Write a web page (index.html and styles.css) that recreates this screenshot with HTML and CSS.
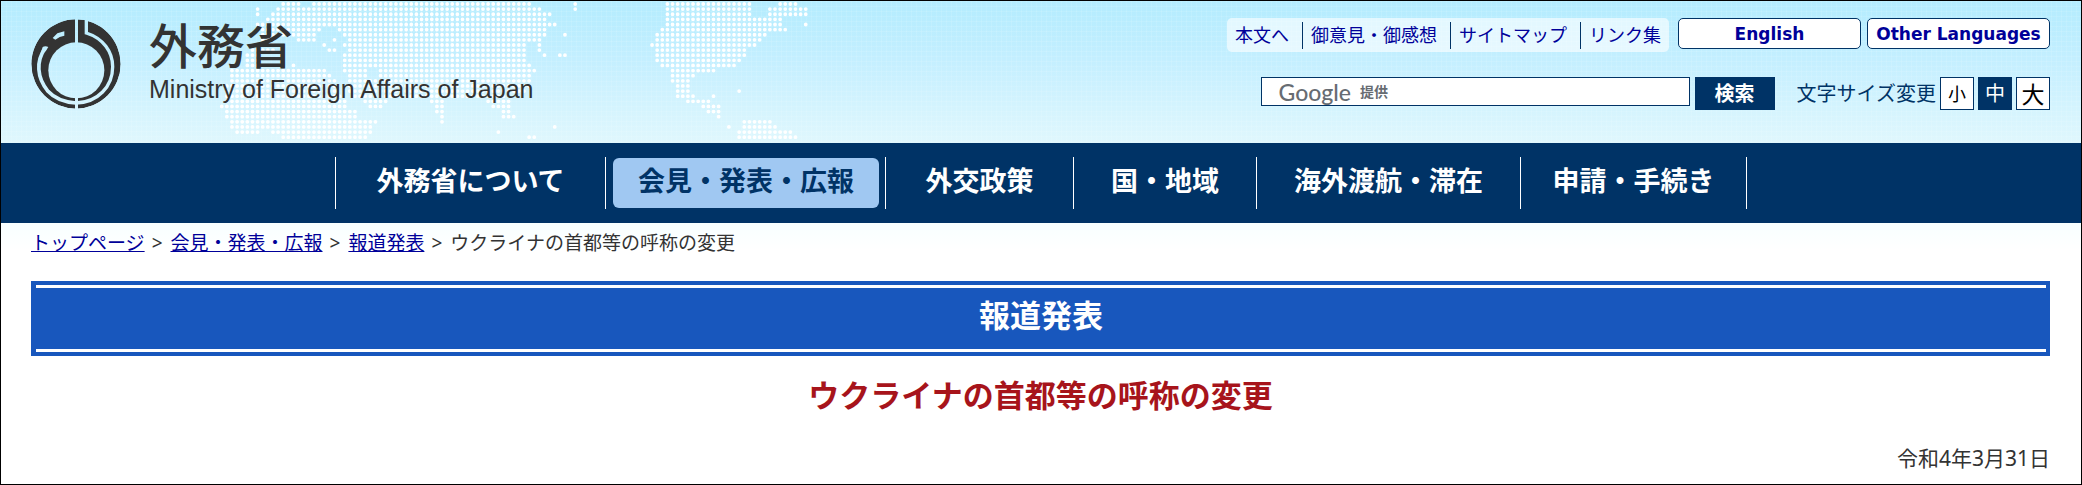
FILE: index.html
```html
<!DOCTYPE html>
<html lang="ja">
<head>
<meta charset="utf-8">
<meta name="viewport" content="width=device-width">
<title>ウクライナの首都等の呼称の変更|外務省</title>
<link rel="stylesheet" href="styles.css">
</head>
<body>
<header class="header">
  <svg class="world" viewBox="0 0 122 27" aria-hidden="true">
    <path d="M13 0h0M18 0h4M24 0h43M75 0h1M93 0h17M115 0h4
    M11 1h0M13 1h1M17 1h52M75 1h1M93 1h17M113 1h8
    M11 2h0M13 2h1M16 2h55M93 2h17M113 2h8
    M15 3h55M72 3h0M93 3h23M120 3h0
    M13 4h59M93 4h23M120 4h1
    M14 5h12M29 5h41M92 5h25
    M14 6h11M30 6h40M73 6h1M91 6h22
    M14 7h3M21 7h4M28 7h1M31 7h38M91 7h21
    M14 8h3M20 8h0M22 8h0M26 8h1M30 8h36M68 8h1M74 8h0M90 8h21
    M12 9h5M24 9h0M27 9h2M31 9h35M68 9h1M74 9h0M91 9h18
    M11 10h3M25 10h0M30 10h36M69 10h1M72 10h2M91 10h18
    M11 11h3M30 11h36M91 11h17
    M11 12h4M20 12h1M30 12h37M92 12h15
    M8 13h19M30 13h5M37 13h31M92 13h0M94 13h9M106 13h0
    M8 14h20M31 14h4M37 14h30M92 14h0M94 14h5M106 14h0
    M8 15h21M31 15h36M94 15h4
    M7 16h22M31 16h36M93 16h0M95 16h3
    M7 17h22M31 17h35M95 17h3M103 17h0M107 17h1
    M7 18h23M32 18h30M95 18h4M102 18h1M110 18h0
    M7 19h24M34 19h5M47 19h3M58 19h5M69 19h0M97 19h5
    M6 20h25M35 20h3M48 20h2M59 20h4M69 20h0M100 20h4
    M7 21h26M48 21h2M59 21h0M61 21h2M70 21h0M101 21h3
    M7 22h26M49 22h1M59 22h0M61 22h3M71 22h0M103 22h1M109 22h0M111 22h0
    M8 23h29M49 23h1M59 23h0M62 23h0M68 23h0M70 23h0M104 23h0M108 23h6
    M8 24h28M51 24h0M60 24h0M71 24h1M105 24h1M108 24h7
    M9 25h5M16 25h20M60 25h1M68 25h0M107 25h11
    M18 26h17M59 26h0M61 26h0M66 26h2M107 26h12"/>
  </svg>
  <a class="brand" href="#">
    <svg class="emblem" viewBox="33 40 270 270" aria-hidden="true">
      <mask id="cut">
        <circle cx="168" cy="175" r="134" fill="#fff"/>
        <g fill="none" stroke="#000">
          <path d="M165 30h9v90h-9zM165 270h9v45h-9z" fill="#000" stroke="none"/>
          <circle cx="169" cy="194" r="84" fill="#000" stroke="none"/>
          <path d="M75 128C48 166 50 216 84 257C106 281 136 290 168 292" stroke-width="11"/>
          <path d="M199 40V82C250 98 278 139 278 183C278 242 234 290 168 292" stroke-width="10"/>
          <path d="M68 124q8-5 17 0l-8 13h-13z" fill="#000" stroke="none"/>
          <path d="M98 97l14-14 21-6v13q-14 2-27 12z" fill="#000" stroke="none"/>
        </g>
      </mask>
      <circle cx="168" cy="175" r="134" fill="#333" mask="url(#cut)"/>
    </svg>
    <span class="brand-text">
      <span class="brand-ja">外務省</span>
      <span class="brand-en">Ministry of Foreign Affairs of Japan</span>
    </span>
  </a>
  <div class="tools">
    <div class="tools-row">
      <ul class="quick">
        <li><a href="#">本文へ</a></li>
        <li><a href="#">御意見・御感想</a></li>
        <li><a href="#">サイトマップ</a></li>
        <li><a href="#">リンク集</a></li>
      </ul>
      <div class="langs">
        <a class="lang" href="#">English</a>
        <a class="lang" href="#">Other Languages</a>
      </div>
    </div>
    <div class="tools-row second">
      <form class="search">
        <div class="field">
          <label for="q"><span class="google">Google</span><span class="offer">提供</span></label>
          <input id="q" type="text">
        </div>
        <button class="go" type="button">検索</button>
      </form>
      <div class="sizes">
        <span class="sizes-label">文字サイズ変更</span>
        <button class="size small" type="button">小</button>
        <button class="size current" type="button">中</button>
        <button class="size large" type="button">大</button>
      </div>
    </div>
  </div>
</header>
<nav class="nav">
  <ul>
    <li><a href="#">外務省について</a></li>
    <li><a class="active" href="#">会見・発表・広報</a></li>
    <li><a href="#">外交政策</a></li>
    <li><a href="#">国・地域</a></li>
    <li><a href="#">海外渡航・滞在</a></li>
    <li><a href="#">申請・手続き</a></li>
  </ul>
</nav>
<main class="main">
  <div class="crumbs"><a href="#">トップページ</a><span>&gt;</span><a href="#">会見・発表・広報</a><span>&gt;</span><a href="#">報道発表</a><span>&gt;</span>ウクライナの首都等の呼称の変更</div>
  <div class="banner"><h2>報道発表</h2></div>
  <h1 class="title">ウクライナの首都等の呼称の変更</h1>
  <p class="date">令和4年3月31日</p>
</main>
</body>
</html>
```
FILE: styles.css
```css
* { box-sizing: border-box; }
body {
  margin: 0;
  min-height: 100vh;
  border: 1px solid #000;
  color: #333;
  font-family: "Noto Sans", "Noto Sans CJK JP", sans-serif;
  background: #fff linear-gradient(#b3ecfe 0, #c4efff 60px, #e2f8fd 150px, #f8ffff 225px, #fff 250px) no-repeat;
}
ul, h1, h2, p { margin: 0; padding: 0; list-style: none; }
a { color: #009; }
button, input { font-family: inherit; margin: 0; padding: 0; }

.header {
  position: relative;
  min-height: 142px;
  padding: 17px 31px 0 30px;
  display: flex;
  justify-content: space-between;
  overflow: hidden;
  background:
    repeating-linear-gradient(90deg, rgba(255,255,255,.1) 0 1px, transparent 1px 5px),
    repeating-linear-gradient(rgba(255,255,255,.1) 0 1px, transparent 1px 5px);
}
.world { position: absolute; left: 190px; top: 3px; width: 625px; overflow: visible; }
.world path { fill: none; stroke: #fff; stroke-width: .74; stroke-linecap: round; stroke-dasharray: 0 1; }

.brand { position: relative; display: flex; gap: 28px; color: #333; text-decoration: none; }
.emblem { width: 90px; height: 90px; margin-top: 1px; }
.brand-text { display: flex; flex-direction: column; }
.brand-ja { font-size: 48px; line-height: 56px; font-weight: 500; }
.brand-en { font: 25px/28px "Liberation Sans", sans-serif; margin-top: 1px; white-space: nowrap; }

.tools { position: relative; }
.tools-row { display: flex; justify-content: flex-end; gap: 9px; }
.second { gap: 22px; margin-top: 25px; }
.quick { display: flex; align-items: center; height: 34px; border-radius: 5px; background: rgba(255,255,255,.6); font-size: 18px; line-height: 27px; }
.quick li { padding: 0 13px 0 8px; }
.quick li + li { border-left: 1px solid #036; }
.quick li:last-child { padding-right: 8px; }
.quick a { text-decoration: none; }
.langs { display: flex; gap: 6px; }
.lang { width: 183px; height: 31px; border: 1px solid #036; border-radius: 5px; background: #fff; text-align: center; font-size: 17px; line-height: 30px; font-weight: 700; font-family: "DejaVu Sans", sans-serif; text-decoration: none; }
.search { display: flex; gap: 5px; align-items: flex-start; }
.field { display: flex; width: 429px; height: 29px; border: 1px solid #036; background: #fff; padding-left: 17px; }
.field label { display: flex; align-items: center; gap: 9px; color: #676c72; line-height: 26px; }
.google { font-family: Lato, sans-serif; font-size: 23px; font-weight: 500; }
.offer { font-size: 14px; font-weight: 700; }
.field input { flex: 1; min-width: 0; border: 0; background: none; outline: 0; }
.go { width: 80px; height: 33px; border: 0; background: #036; color: #fff; font-size: 20px; font-weight: 700; line-height: 32px; }
.sizes { display: flex; gap: 4px; align-items: center; color: #036; }
.sizes-label { font-size: 20px; line-height: 33px; }
.size { width: 34px; height: 33px; border: 1px solid #036; background: #fff; color: #000; font-size: 20px; line-height: 30px; }
.small { font-size: 18px; }
.large { font-size: 23px; }
.current { background: #036; color: #fff; }

.nav { background: #036; padding: 14px 0; }
.nav ul { display: grid; grid-template-columns: 270px 280px 188px 183px 264px 227px; justify-content: center; height: 52px; }
.nav li { display: flex; justify-content: center; align-items: center; border-left: 1px solid #fff; }
.nav li:last-child { border-right: 1px solid #fff; }
.nav a { height: 50px; color: #fff; text-decoration: none; font-size: 27px; line-height: 46px; font-weight: 700; white-space: nowrap; }
.nav .active { flex: 1; margin: 0 6px 0 7px; text-align: center; border-radius: 6px; background: #a0c8f2; color: #036; }

.main { padding: 6px 31px 0 30px; }
.crumbs { font-size: 19px; line-height: 28px; }
.crumbs span { margin: 0 8px 0 7px; }
.banner { margin-top: 24px; padding: 4px 4px 4px 5px; background: #1857bd; }
.banner h2 { border: solid #fff; border-width: 3px 0; height: 67px; color: #fff; font-size: 31px; line-height: 54px; text-align: center; }
.title { margin-top: 16px; color: #a7141b; font-size: 31px; line-height: 46px; text-align: center; }
.date { margin-top: 24px; font-size: 21px; line-height: 32px; text-align: right; }
```
